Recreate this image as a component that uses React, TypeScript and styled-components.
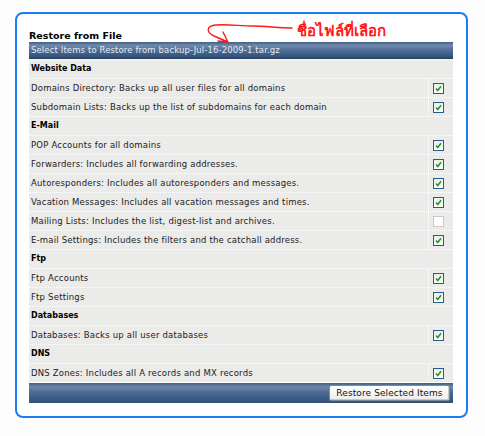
import React from 'react';
import styled, { createGlobalStyle } from 'styled-components';

const GlobalStyle = createGlobalStyle`
  html, body {
    margin: 0;
    padding: 0;
    background: #fdfdfd;
  }
  body {
    font-family: "DejaVu Sans", Verdana, sans-serif;
  }
`;

const Page = styled.div`
  position: relative;
  width: 485px;
  height: 436px;
  padding: 12px 0 0 15px;
  box-sizing: border-box;
`;

const Frame = styled.div`
  width: 453px;
  height: 406px;
  box-sizing: border-box;
  border: 2px solid #1b7df3;
  border-radius: 8px;
  padding: 16px 13px 0 12px;
  background: #fff;
`;

const Title = styled.div`
  height: 12px;
  line-height: 12px;
  font-size: 9.5px;
  font-weight: bold;
  color: #000;
`;

const Table = styled.div`
  width: 424px;
  display: flex;
  flex-direction: column;
`;

const HeaderBar = styled.div`
  height: 17px;
  line-height: 17px;
  padding-left: 2px;
  font-size: 8.5px;
  letter-spacing: 0.12px;
  color: #e6ebf2;
  background: linear-gradient(#3f5f86 0%, #7189aa 20%, #53709a 45%, #34547b 85%, #283f5e 100%);
`;

const Row = styled.div`
  display: flex;
  height: 19px;
  box-sizing: border-box;
  border-top: 1px dotted #ffffff;
  background: #ebebe9;
`;

const Label = styled.div<{ $section?: boolean }>`
  flex: 1;
  padding-left: 2px;
  line-height: 18px;
  font-size: ${({ $section }) => ($section ? '8px' : '8.5px')};
  letter-spacing: ${({ $section }) => ($section ? '0' : '0.2px')};
  font-weight: ${({ $section }) => ($section ? 'bold' : 'normal')};
  color: ${({ $section }) => ($section ? '#000' : '#222')};
`;

const CheckCell = styled.div`
  width: 25px;
  box-sizing: border-box;
  padding-left: 4px;
  border-left: 1px dotted #ffffff;
  display: flex;
  align-items: center;
`;

const Box = styled.span<{ $checked: boolean }>`
  width: 11px;
  height: 11px;
  box-sizing: border-box;
  display: flex;
  align-items: center;
  justify-content: center;
  border: 1px solid ${({ $checked }) => ($checked ? '#2c5a8a' : '#c9c9c9')};
  background: ${({ $checked }) => ($checked ? 'linear-gradient(#ececec, #ffffff)' : '#ffffff')};
`;

const BottomBar = styled.div`
  height: 20px;
  display: flex;
  align-items: center;
  justify-content: flex-end;
  padding-right: 3px;
  border-top: 1px solid #ffffff;
  background: linear-gradient(#3f5f86 0%, #6e87a8 20%, #4d6b93 45%, #395a82 80%, #33527a 100%);
`;

const Button = styled.button`
  width: 121px;
  height: 16px;
  padding: 0;
  font-family: "DejaVu Sans", Verdana, sans-serif;
  font-size: 9px;
  letter-spacing: 0.1px;
  color: #111;
  background: linear-gradient(#ffffff, #ededed);
  border: 1px solid #7f8a96;
  border-radius: 2px;
  box-shadow: inset -1px -1px 0 #c8c8c8;
`;

const Annotation = styled.div`
  position: absolute;
  left: 297px;
  top: 20px;
  font-family: "Noto Sans", "DejaVu Sans", sans-serif;
  font-size: 15px;
  font-weight: bold;
  color: #ff1a1a;
  line-height: 20px;
`;

const Arrow = styled.svg`
  position: absolute;
  left: 200px;
  top: 15px;
`;

type Item = { label: string; checked: boolean };
type Section = { title: string; items: Item[] };

const sections: Section[] = [
  {
    title: 'Website Data',
    items: [
      { label: 'Domains Directory: Backs up all user files for all domains', checked: true },
      { label: 'Subdomain Lists: Backs up the list of subdomains for each domain', checked: true }
    ]
  },
  {
    title: 'E-Mail',
    items: [
      { label: 'POP Accounts for all domains', checked: true },
      { label: 'Forwarders: Includes all forwarding addresses.', checked: true },
      { label: 'Autoresponders: Includes all autoresponders and messages.', checked: true },
      { label: 'Vacation Messages: Includes all vacation messages and times.', checked: true },
      { label: 'Mailing Lists: Includes the list, digest-list and archives.', checked: false },
      { label: 'E-mail Settings: Includes the filters and the catchall address.', checked: true }
    ]
  },
  {
    title: 'Ftp',
    items: [
      { label: 'Ftp Accounts', checked: true },
      { label: 'Ftp Settings', checked: true }
    ]
  },
  {
    title: 'Databases',
    items: [{ label: 'Databases: Backs up all user databases', checked: true }]
  },
  {
    title: 'DNS',
    items: [{ label: 'DNS Zones: Includes all A records and MX records', checked: true }]
  }
];

function Checkbox({ checked }: { checked: boolean }) {
    return (
        <Box $checked={checked}>
            {checked && (
                <svg width="7" height="7" viewBox="0 0 7 7">
                    <polyline points="1 3.5 2.8 5.5 6 1.2" fill="none" stroke="#1f9a1f" strokeWidth="1.6" />
                </svg>
            )}
        </Box>
    );
}

export default function App() {
    return (
        <Page>
            <GlobalStyle />
            <Frame>
                <Title>Restore from File</Title>
                <Table>
                    <HeaderBar>Select Items to Restore from backup-Jul-16-2009-1.tar.gz</HeaderBar>
                    {sections.map((section) => (
                        <React.Fragment key={section.title}>
                            <Row>
                                <Label $section>{section.title}</Label>
                            </Row>
                            {section.items.map((item) => (
                                <Row key={item.label}>
                                    <Label>{item.label}</Label>
                                    <CheckCell>
                                        <Checkbox checked={item.checked} />
                                    </CheckCell>
                                </Row>
                            ))}
                        </React.Fragment>
                    ))}
                    <BottomBar>
                        <Button>Restore Selected Items</Button>
                    </BottomBar>
                </Table>
            </Frame>
            <Arrow width="100" height="32" viewBox="0 0 100 32">
                <path
                    d="M92 13 C78 13, 66 11, 52 11 C40 11, 28 9, 16 10 C6 11, 6 17, 14 21 L28 27 M23 17 L28 27 L18 26"
                    fill="none"
                    stroke="#ff1a1a"
                    strokeWidth="1.4"
                    strokeLinecap="round"
                    strokeLinejoin="round"
                />
            </Arrow>
            <Annotation>ชื่อไฟล์ที่เลือก</Annotation>
        </Page>
    );
}
